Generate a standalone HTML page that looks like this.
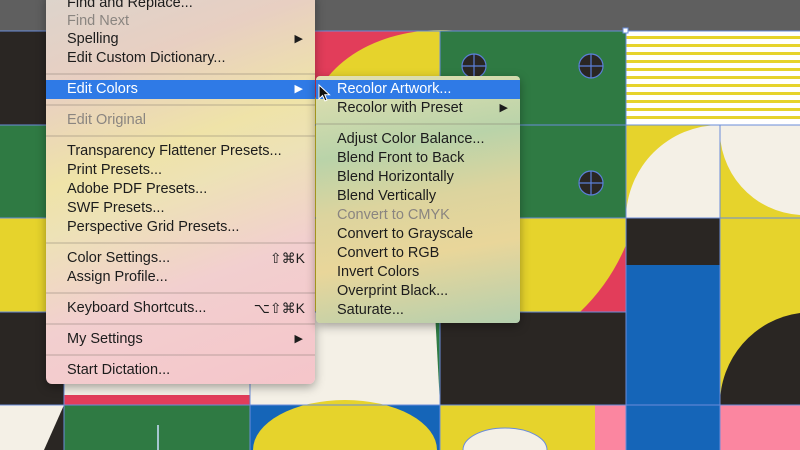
<!DOCTYPE html>
<html style="overflow:hidden"><head><meta charset="utf-8"><style>
html,body{margin:0;width:800px;height:450px;overflow:hidden}
body{position:relative;font-family:"Liberation Sans",sans-serif;background:#5f5f5f}
svg.bg{position:absolute;left:0;top:0}
.menu{position:absolute;border-radius:0 0 6px 6px;box-shadow:0 3px 10px rgba(0,0,0,.35);overflow:hidden}
.it{position:absolute;left:0;right:0;height:19px;line-height:19px;font-size:14.5px;color:#1c1c1c;padding-left:21px;white-space:nowrap}
.dis{color:#8a8580}
.sel{background:#2f7ae6;color:#fff}
.sep{position:absolute;left:0;right:0;height:2px;background:rgba(120,110,100,.22)}
.arr{position:absolute;right:12px;top:0;font-size:11px}
.sc{position:absolute;right:10px;top:0;font-size:14px}
</style></head><body>
<svg class="bg" width="800" height="450" viewBox="0 0 800 450">
<rect x="0" y="31" width="800" height="419" fill="#e6d32c"/>
<rect x="0" y="31" width="64" height="94" fill="#2a2623"/>
<rect x="0" y="125" width="64" height="93" fill="#2f7a43"/>
<rect x="0" y="218" width="64" height="94" fill="#e6d32c"/>
<rect x="0" y="312" width="64" height="93" fill="#2a2623"/>
<rect x="0" y="405" width="64" height="45" fill="#f4f0e6"/>
<polygon points="64,405 64,450 44,450" fill="#2a2623"/>
<rect x="64" y="312" width="186" height="93" fill="#f4f0e6"/>
<rect x="64" y="395" width="186" height="10" fill="#e23d5a"/>
<rect x="64" y="405" width="186" height="45" fill="#2f7a43"/>
<line x1="158" y1="425" x2="158" y2="450" stroke="#cfe0ff" stroke-width="1.5"/>
<rect x="250" y="218" width="190" height="187" fill="#2f7a43"/>
<path d="M250 218 A190 190 0 0 1 435 312 L440 405 L250 405Z" fill="#f4f0e6"/>
<rect x="250" y="405" width="190" height="45" fill="#1565b8"/>
<ellipse cx="345" cy="450" rx="92" ry="50" fill="#e6d32c"/>
<rect x="315" y="31" width="125" height="94" fill="#e23d5a"/>
<ellipse cx="440" cy="125" rx="130" ry="95" fill="#e6d32c"/>
<rect x="315" y="125" width="125" height="187" fill="#e6d32c"/>
<path d="M400 312 A100 100 0 0 0 440 240 L440 312Z" fill="#e23d5a"/>
<rect x="440" y="31" width="186" height="187" fill="#2f7a43"/>
<g fill="#2a2623" stroke="#5b7fd8" stroke-width="1.2">
<circle cx="474" cy="66" r="12"/><circle cx="591" cy="66" r="12"/><circle cx="591" cy="183" r="12"/></g>
<g stroke="#5b7fd8" stroke-width="1.2"><path d="M462 66h24M474 54v24M579 66h24M591 54v24M579 183h24M591 171v24"/></g>
<rect x="440" y="218" width="186" height="94" fill="#e6d32c"/>
<path d="M626 245 A200 200 0 0 1 580 312 L626 312Z" fill="#e23d5a"/>
<rect x="440" y="312" width="186" height="93" fill="#2a2623"/>
<rect x="595" y="405" width="31" height="45" fill="#fb86a0"/>
<ellipse cx="505" cy="450" rx="42" ry="22" fill="#f4f0e6" stroke="#6a8cda"/>
<rect x="626" y="31" width="174" height="94" fill="#fff"/>
<g fill="#e6d32c"><rect x="626" y="36" width="174" height="3"/><rect x="626" y="44" width="174" height="3"/><rect x="626" y="52" width="174" height="3"/><rect x="626" y="60" width="174" height="3"/><rect x="626" y="68" width="174" height="3"/><rect x="626" y="76" width="174" height="3"/><rect x="626" y="84" width="174" height="3"/><rect x="626" y="92" width="174" height="3"/><rect x="626" y="100" width="174" height="3"/><rect x="626" y="108" width="174" height="3"/><rect x="626" y="116" width="174" height="3"/></g>
<rect x="626" y="125" width="94" height="93" fill="#e6d32c"/>
<path d="M626 218 A94 94 0 0 1 720 125 L720 218Z" fill="#f4f0e6"/>
<rect x="720" y="125" width="80" height="93" fill="#e6d32c"/>
<path d="M720 125 A85 85 0 0 0 800 215 L800 125Z" fill="#f4f0e6"/>
<rect x="626" y="218" width="94" height="47" fill="#2a2623"/>
<rect x="626" y="265" width="94" height="185" fill="#1565b8"/>
<path d="M720 405 A92 92 0 0 1 800 313 L800 405Z" fill="#2a2623"/>
<rect x="720" y="405" width="80" height="45" fill="#fb86a0"/>
<g stroke="#6a8cda" stroke-width="1" fill="none"><path d="M0 31H800M0 125H800M0 218H800M0 312H626M0 405H800M64 31V450M250 312V450M440 31V450M626 31V450M720 125V450"/></g>
<rect x="623" y="28" width="5" height="5" fill="#fff" stroke="#6a8cda"/>
</svg>

<div class="menu" style="left:46px;top:-6px;width:269px;height:390px;background:linear-gradient(160deg,#dcd4cc 0%,#e8cfc2 20%,#efe3a8 40%,#ede2b6 50%,#f2cfcf 70%,#f5c5ca 100%)">
<div class="it" style="top:0">Find and Replace...</div>
<div class="it dis" style="top:18px">Find Next</div>
<div class="it" style="top:36px">Spelling<span class="arr">▶</span></div>
<div class="it" style="top:55px">Edit Custom Dictionary...</div>
<div class="sep" style="top:79px"></div>
<div class="it sel" style="top:86px">Edit Colors<span class="arr">▶</span></div>
<div class="sep" style="top:110px"></div>
<div class="it dis" style="top:117px">Edit Original</div>
<div class="sep" style="top:141px"></div>
<div class="it" style="top:148px">Transparency Flattener Presets...</div>
<div class="it" style="top:167px">Print Presets...</div>
<div class="it" style="top:186px">Adobe PDF Presets...</div>
<div class="it" style="top:205px">SWF Presets...</div>
<div class="it" style="top:224px">Perspective Grid Presets...</div>
<div class="sep" style="top:248px"></div>
<div class="it" style="top:255px">Color Settings...<span class="sc">⇧⌘K</span></div>
<div class="it" style="top:274px">Assign Profile...</div>
<div class="sep" style="top:298px"></div>
<div class="it" style="top:305px">Keyboard Shortcuts...<span class="sc">⌥⇧⌘K</span></div>
<div class="sep" style="top:329px"></div>
<div class="it" style="top:336px">My Settings<span class="arr">▶</span></div>
<div class="sep" style="top:360px"></div>
<div class="it" style="top:367px">Start Dictation...</div>
</div>

<div class="menu" style="left:316px;top:76px;width:204px;height:247px;border-radius:4px;background:linear-gradient(170deg,#e4e0b0 0%,#b9d3a9 30%,#dcd49e 50%,#e9d69a 70%,#b4cfae 100%)">
<div class="it sel" style="top:4px">Recolor Artwork...</div>
<div class="it" style="top:23px">Recolor with Preset<span class="arr">▶</span></div>
<div class="sep" style="top:47px"></div>
<div class="it" style="top:54px">Adjust Color Balance...</div>
<div class="it" style="top:73px">Blend Front to Back</div>
<div class="it" style="top:92px">Blend Horizontally</div>
<div class="it" style="top:111px">Blend Vertically</div>
<div class="it dis" style="top:130px">Convert to CMYK</div>
<div class="it" style="top:149px">Convert to Grayscale</div>
<div class="it" style="top:168px">Convert to RGB</div>
<div class="it" style="top:187px">Invert Colors</div>
<div class="it" style="top:206px">Overprint Black...</div>
<div class="it" style="top:225px">Saturate...</div>
</div>
<svg style="position:absolute;left:318px;top:84px" width="14" height="20" viewBox="0 0 14 20"><path d="M1 1 L1 15 L4.5 11.5 L7 17 L9 16 L6.8 10.8 L11.5 10.8Z" fill="#111" stroke="#fff" stroke-width="1"/></svg>
</body></html>
